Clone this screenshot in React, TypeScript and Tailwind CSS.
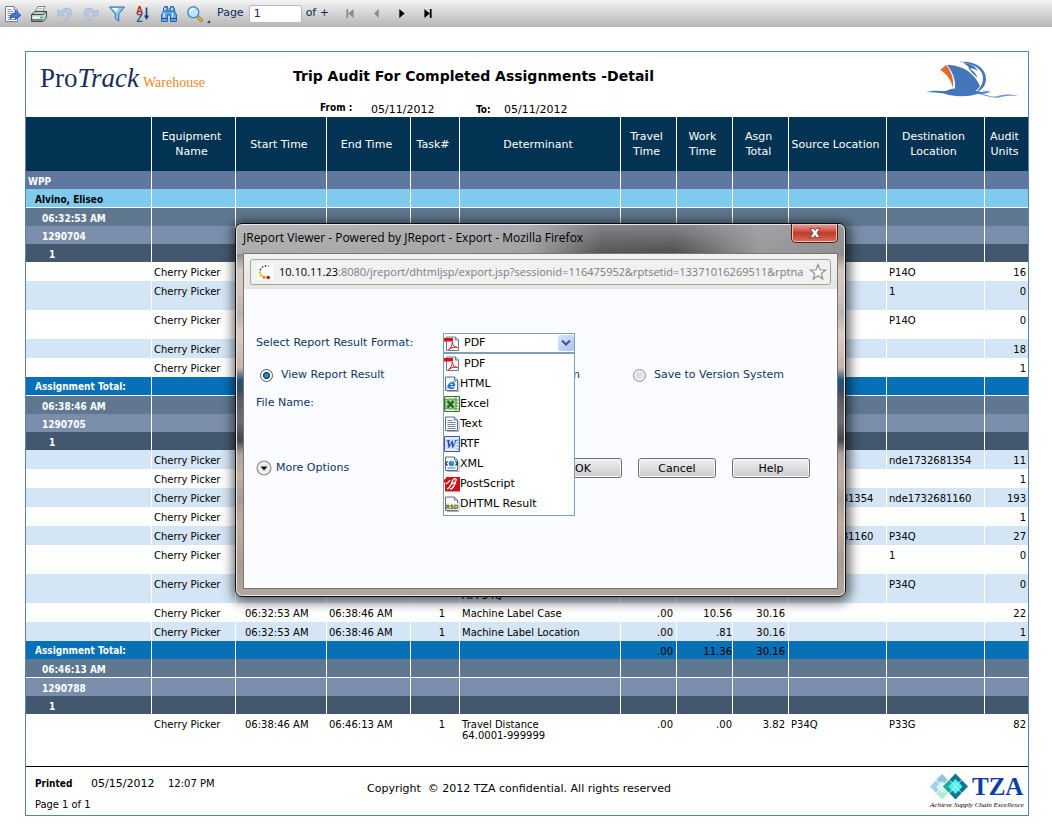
import { ReactNode, useState } from "react";

type RowKind = "site" | "person" | "time" | "assignment" | "task" | "total" | "even" | "odd";

type Row = {
  kind: RowKind;
  label?: string;
  cells?: string[];
  height?: "tall" | "last";
  line?: boolean;
};

// cells: equipment, start, end, task, determinant, travel, work, total, source, destination, units
const item = (start: string, end: string, rest: string[]) => ["Cherry Picker", start, end, start ? "1" : "", ...rest];
const A = "06:32:53 AM";
const B = "06:38:46 AM";
const C = "06:46:13 AM";

const rows: Row[] = [
  { kind: "site", label: "WPP" },
  { kind: "person", label: "Alvino, Eliseo", line: true },
  { kind: "time", label: A },
  { kind: "assignment", label: "1290704" },
  { kind: "task", label: "1" },
  { kind: "odd", cells: item("", "", ["", "", "", "", "", "P14O", "16"]) },
  { kind: "even", height: "tall", cells: item("", "", ["", "", "", "", "", "1", "0"]) },
  { kind: "odd", height: "tall", cells: item("", "", ["", "", "", "", "", "P14O", "0"]) },
  { kind: "even", cells: item("", "", ["", "", "", "", "", "", "18"]) },
  { kind: "odd", cells: item("", "", ["", "", "", "", "", "", "1"]) },
  { kind: "total", label: "Assignment Total:", line: true },
  { kind: "time", label: B },
  { kind: "assignment", label: "1290705" },
  { kind: "task", label: "1" },
  { kind: "even", cells: item("", "", ["", "", "", "", "", "nde1732681354", "11"]) },
  { kind: "odd", cells: item("", "", ["", "", "", "", "", "", "1"]) },
  { kind: "even", cells: item("", "", ["", "", "", "", "nde1732681354", "nde1732681160", "193"]) },
  { kind: "odd", cells: item("", "", ["", "", "", "", "", "", "1"]) },
  { kind: "even", cells: item("", "", ["", "", "", "", "nde1732681160", "P34Q", "27"]) },
  { kind: "odd", height: "tall", cells: item("", "", ["", "", "", "", "", "1", "0"]) },
  { kind: "even", height: "tall", cells: item("", "", ["\nAt P34Q", "", "", "", "", "P34Q", "0"]) },
  { kind: "odd", cells: item(A, B, ["Machine Label Case", ".00", "10.56", "30.16", "", "", "22"]) },
  { kind: "even", cells: item(A, B, ["Machine Label Location", ".00", ".81", "30.16", "", "", "1"]) },
  { kind: "total", label: "Assignment Total:", cells: ["", "", "", "", "", ".00", "11.36", "30.16", "", "", ""] },
  { kind: "time", label: C, line: true },
  { kind: "assignment", label: "1290788" },
  { kind: "task", label: "1" },
  { kind: "odd", height: "last", cells: item(B, C, ["Travel Distance\n64.0001-999999", ".00", ".00", "3.82", "P34Q", "P33G", "82"]) },
];

const rowStyle: Record<RowKind, string> = {
  site: "bg-[#6078a0]",
  person: "bg-[#80caee]",
  time: "bg-[#5f788f]",
  assignment: "bg-[#7a8dab]",
  task: "bg-[#43586e]",
  total: "bg-[#0870b6]",
  even: "bg-[#d4e5f5]",
  odd: "bg-white",
};

const labelStyle: Record<RowKind, string> = {
  site: "pl-0.5 pt-0.5 text-white",
  person: "pl-[9px] pt-0.5 text-black",
  time: "pl-4 pt-0.5 text-white",
  assignment: "pl-4 pt-0.5 text-white",
  task: "pl-[23px] pt-0.5 text-white",
  total: "pl-[9px] text-white",
  even: "",
  odd: "",
};

const cellStyle = [
  "pl-0.5",
  "pl-[9px]",
  "pl-0.5",
  "pr-3.5 text-right",
  "pl-0.5",
  "pr-[3px] text-right",
  "text-right",
  "pr-[3px] text-right",
  "pl-0.5",
  "pl-0.5",
  "pr-0.5 text-right",
];

const columns = [
  { width: "w-[126px]", title: "" },
  { width: "w-[84px]", title: "Equipment\nName" },
  { width: "w-[91px]", title: "Start Time" },
  { width: "w-[84px]", title: "End Time" },
  { width: "w-[49px]", title: "Task#" },
  { width: "w-[161px]", title: "Determinant" },
  { width: "w-[56px]", title: "Travel\nTime" },
  { width: "w-[56px]", title: "Work\nTime" },
  { width: "w-[56px]", title: "Asgn\nTotal" },
  { width: "w-[98px]", title: "Source Location" },
  { width: "w-[98px]", title: "Destination\nLocation" },
  { width: "w-[43px]", title: "Audit\nUnits" },
];

function rowHeight(row: Row) {
  if (row.height === "last") return "h-[52px]";
  if (row.height === "tall") return "h-[29px]";
  if (row.line || row.kind === "even" || row.kind === "odd") return "h-[19px]";
  return "h-[18px]";
}

function Icon({ children, className = "size-4" }: { children: ReactNode; className?: string }) {
  return (
    <svg viewBox="0 0 16 16" className={className + " shrink-0"} aria-hidden="true">
      {children}
    </svg>
  );
}

function ExportIcon() {
  return (
    <Icon>
      <path d="M.5 .5h8.500l3.500 3.500v11.500H.5z" fill="#fff" stroke="#6d7f9c" />
      <path d="M9 .5v3.500h3.500" fill="#dfe6f2" stroke="#6d7f9c" />
      <path d="M2.500 3.500h4M2.500 5.500h6M2.500 7.500h4M2.500 9.500h3M2.500 11.500h2M2.500 13.500h8" stroke="#7d8ba5" strokeWidth=".9" />
      <path d="M5 12.500c0-4 2-5.500 5.500-5.500V4.500l5.300 4.700-5.300 4.500v-2.500c-2 0-3.500.3-5.500 1.300z" fill="#3f77e6" stroke="#1b3fae" strokeWidth=".8" />
    </Icon>
  );
}

function PrintIcon() {
  return (
    <Icon>
      <path d="M4.500 6l2.500-5.500h7L11.500 6z" fill="#fff" stroke="#5f6b6b" strokeWidth=".8" />
      <path d="M7.500 2.500h4M6.800 4.200h4" stroke="#8fa0a0" strokeWidth=".7" />
      <path d="M.5 8.500L4 5.500h11.500v6l-3.500 4H.5z" fill="#c3cccc" stroke="#434e4e" />
      <path d="M.5 8.500h11.500l3.500-3" fill="none" stroke="#434e4e" />
      <path d="M2 11.500h8.500" stroke="#fff" strokeWidth="1.600" />
      <path d="M1 14h10.500" stroke="#5b6767" strokeWidth="1.400" />
      <path d="M9 11.500h2.500M10 13.500h2" stroke="#2fd03c" strokeWidth="1.600" />
    </Icon>
  );
}

function UndoIcon({ flip = false }: { flip?: boolean }) {
  return (
    <Icon className={flip ? "size-4 -scale-x-100" : "size-4"}>
      <path d="M1 3.500V10h6.500L5.300 7.800C7 5.300 10.800 5 10.800 8c0 2.800-1.300 4.500-3.300 7 4-1.800 7.300-4.800 7.300-8.500C14.800 1.300 8 .3 3.300 5.800z" fill="#b9c9e4" stroke="#9db1d6" strokeWidth=".7" />
    </Icon>
  );
}

function FilterIcon() {
  return (
    <Icon>
      <path d="M.6 1h14.800L9.700 8v7L6.300 12.500V8z" fill="#8fcdf3" stroke="#2468b4" />
      <path d="M2.500 2h7L7.500 6z" fill="#e9f7ff" />
    </Icon>
  );
}

function SortIcon() {
  return (
    <Icon>
      <text x="4.500" y="7.500" textAnchor="middle" fontFamily="Liberation Sans, sans-serif" fontWeight="bold" fontSize="10" fill="#b3261a">
        A
      </text>
      <text x="4.500" y="15.500" textAnchor="middle" fontFamily="Liberation Sans, sans-serif" fontWeight="bold" fontSize="10" fill="#2f5c86">
        Z
      </text>
      <path d="M11.500 1.500v10" stroke="#173c8a" strokeWidth="1.600" />
      <path d="M9 9.500h5L11.500 14z" fill="#173c8a" />
    </Icon>
  );
}

function FindIcon() {
  return (
    <Icon>
      <path d="M2.500 2h1v-1.500h3V2h.5v3h2V2h.5V.5h3V2h1v3l2 4v6.500H9.500V9h-3v6.500H.5V9l2-4z" fill="#5aa6e2" stroke="#1c5da6" strokeWidth=".9" />
      <path d="M2.500 5h4M9.500 5h4M.5 12.500h6M9.500 12.500h6" stroke="#1c4f8e" strokeWidth=".9" />
      <path d="M3 6.500v5M11.500 6.500v5M4 2v2.500M11 2v2.500" stroke="#d9f0ff" strokeWidth="1.400" />
    </Icon>
  );
}

function ZoomIcon() {
  return (
    <Icon>
      <path d="M10.500 10.500l3.800 3.800" stroke="#8f6a33" strokeWidth="3.200" strokeLinecap="round" />
      <path d="M10.500 10.500l3.800 3.800" stroke="#f0b34c" strokeWidth="1.800" strokeLinecap="round" />
      <circle cx="6.300" cy="6.300" r="5.500" fill="#bfe3fb" stroke="#3a8edb" strokeWidth="1.400" />
      <path d="M3 6c.3-2.300 2-3.300 4.300-3" fill="none" stroke="#fff" strokeWidth="1.600" />
    </Icon>
  );
}

function Sheet() {
  return (
    <>
      <path d="M3 15.500h12V5" fill="none" stroke="#a9b3c2" />
      <path d="M1.500 1h9l3 3v10.500h-12z" fill="#f6f8fb" stroke="#5c6d86" />
      <path d="M10.500 1v3h3" fill="#dce3ee" stroke="#5c6d86" />
    </>
  );
}

const formats: { name: string; icon: ReactNode }[] = [
  {
    name: "PDF",
    icon: (
      <Icon>
        <path d="M2.500 1h9l3 3v10.500h-12z" fill="#f7f7f7" stroke="#6a7a8c" />
        <path d="M11.500 1v3h3" fill="none" stroke="#6a7a8c" />
        <path d="M0 2h9v3.500H0z" fill="#d8121a" />
        <path d="M4.500 13.500c2-1 3.800-4 3.800-7.500.3 3.500 2.200 5 5.200 5.500-3-.8-6 0-9 2z" fill="none" stroke="#cf2025" />
      </Icon>
    ),
  },
  {
    name: "HTML",
    icon: (
      <Icon>
        <Sheet />
        <text x="7.200" y="13.300" textAnchor="middle" fontFamily="DejaVu Sans, sans-serif" fontWeight="bold" fontStyle="italic" fontSize="12" fill="#1668d4">
          e
        </text>
        <path d="M2.500 13c1-4.500 4.500-8 9.500-7.500" fill="none" stroke="#4ba3ef" strokeWidth=".9" />
      </Icon>
    ),
  },
  {
    name: "Excel",
    icon: (
      <Icon>
        <path d="M.5 .5h15v15H.5z" fill="#e8f3e4" stroke="#2f7a2c" />
        <path d="M12 1v14M12 4h3M12 7h3M12 10h3M12 13h3" stroke="#6aa965" />
        <path d="M1 3h11v10H1z" fill="#9fcb95" stroke="#2f7a2c" strokeWidth=".6" />
        <path d="M3.500 5l6 6.500M9.500 5l-6 6.500" stroke="#17601a" strokeWidth="2" />
      </Icon>
    ),
  },
  {
    name: "Text",
    icon: (
      <Icon>
        <Sheet />
        <path d="M3.500 4.500h5M3.500 6.500h8M3.500 8.500h8M3.500 10.500h8M3.500 12.500h8" stroke="#6d7680" strokeWidth=".9" />
      </Icon>
    ),
  },
  {
    name: "RTF",
    icon: (
      <Icon>
        <path d="M.5 .5h15v15H.5z" fill="#e3ecfb" stroke="#3559b8" />
        <path d="M12.500 4h2.500M12.500 7h2.500M12.500 10h2.500M12.500 13h2.500" stroke="#7892cf" />
        <path d="M1 3h11.500v10H1z" fill="#cddcf7" />
        <text x="7" y="12" textAnchor="middle" fontFamily="Liberation Serif, serif" fontWeight="bold" fontStyle="italic" fontSize="12" fill="#1f3fa0">
          W
        </text>
      </Icon>
    ),
  },
  {
    name: "XML",
    icon: (
      <Icon>
        <Sheet />
        <circle cx="7.500" cy="7.500" r="2.800" fill="#2a86d8" />
        <circle cx="8.300" cy="6.700" r="1" fill="#5bc26a" />
        <path d="M3.500 5.500l-2 2 2 2M11.500 5.500l2 2-2 2" fill="none" stroke="#17305e" strokeWidth="1.200" />
        <path d="M3.500 12h8" stroke="#4d78b8" />
      </Icon>
    ),
  },
  {
    name: "PostScript",
    icon: (
      <Icon>
        <path d="M2.500 1H16v14.500H1V8z" fill="#d1101b" />
        <path d="M0 7l6-6H3L0 4z" fill="#d1101b" />
        <path d="M3 13c3-1 4-4 5-7s3-4 4-3-1 4-4 5M6 13c4 0 3-4 6-6M2 8c2-1 3-2 4-4" fill="none" stroke="#fff" strokeWidth="1.300" />
      </Icon>
    ),
  },
  {
    name: "DHTML Result",
    icon: (
      <Icon>
        <Sheet />
        <path d="M2 7h12v7H2z" fill="#f3f0d8" />
        <text x="8" y="13" textAnchor="middle" fontFamily="DejaVu Sans Condensed, sans-serif" fontWeight="bold" fontSize="6" fill="#5a5410">
          RSD
        </text>
      </Icon>
    ),
  },
];

function Toolbar() {
  const tools = [
    { name: "Export", icon: <ExportIcon /> },
    { name: "Print", icon: <PrintIcon /> },
    { name: "Undo", icon: <UndoIcon /> },
    { name: "Redo", icon: <UndoIcon flip /> },
    { name: "Filter", icon: <FilterIcon /> },
    { name: "Sort", icon: <SortIcon /> },
    { name: "Search", icon: <FindIcon /> },
    { name: "Zoom", icon: <ZoomIcon /> },
  ];
  const nav = [
    { name: "First page", color: "text-[#8a8a8a]", d: "M1 0h2v10H1zM9 0v10L3 5z" },
    { name: "Previous page", color: "text-[#8a8a8a]", d: "M8 0v10L3 5z" },
    { name: "Next page", color: "text-black", d: "M2 0v10l6-5z" },
    { name: "Last page", color: "text-black", d: "M1 0v10l6-5zM7 0h2v10H7z" },
  ];
  return (
    <header className="flex h-[27px] items-center bg-linear-to-b from-[#f4f4f4] to-[#b6b6b6] pl-[5px] text-[11px] text-[#0a2a5c]">
      <div className="flex gap-2.5">
        {tools.map((t) => (
          <button key={t.name} type="button" aria-label={t.name}>
            {t.icon}
          </button>
        ))}
      </div>
      <svg viewBox="0 0 4 4" className="mb-1 ml-1 size-[3px] self-end" aria-hidden="true">
        <path d="M4 0v4H0z" fill="#12305f" />
      </svg>
      <label htmlFor="page" className="ml-[7px]">
        Page
      </label>
      <input id="page" defaultValue="1" className="ml-[5px] h-[18px] w-[53px] rounded-xs border border-[#b5b9c2] bg-white px-1" />
      <span className="ml-1">of +</span>
      <div className="ml-4 flex gap-4">
        {nav.map((n) => (
          <button key={n.name} type="button" aria-label={n.name} className={n.color}>
            <svg viewBox="0 0 10 10" className="h-[9px] w-2.5" fill="currentColor" aria-hidden="true">
              <path d={n.d} />
            </svg>
          </button>
        ))}
      </div>
    </header>
  );
}

function ShipLogo() {
  return (
    <svg viewBox="0 0 94 40" className="h-10 w-[94px]" aria-hidden="true">
      <path d="M14 10l6-5c6 7 8 15 7 23-2-8-6-14-13-18z" fill="#e2692b" />
      <path d="M21 5c12 0 26 5 33 21-3 5-8 8-14 8H28C31 24 28 13 21 5z" fill="#4376bb" />
      <path d="M33 2c14-2 27 5 27 17 0 7-5 12-11 14 5-4 8-9 8-15C57 9 47 3 33 2z" fill="#4376bb" />
      <path d="M37 3c7 0 12 3 15 8-3-2-6-3-8-2 4 2 6 5 8 9-4-3-7-6-9-9 0-3-3-4-6-6z" fill="#4376bb" />
      <path d="M37 3.500c3 2 5 4 6 7 2 3 5 6 9 8" fill="none" stroke="#fff" strokeWidth=".9" />
      <path d="M0 32c8-2 14-1 20-1 8-4 20-3 30 0 6 1 9 2 14 0-3 3-8 3-13 3-9 3-24 3-33-.5C12 32.500 6 32.500 0 32z" fill="#4376bb" />
      <path d="M52 33.500c8 0 12 4.500 20 2.500 6-2 12-2 21 0-8-.5-14-.5-20 1.500-7 1-14-2-21-4z" fill="#6f98cf" />
      <path d="M57 31l7 1" stroke="#6f98cf" />
    </svg>
  );
}

function TzaLogo() {
  return (
    <div className="w-[95px]">
      <div className="flex h-7 items-center">
        <svg viewBox="0 0 40 28" className="h-7 w-10 shrink-0" aria-hidden="true">
          <path d="M12 1l6 6-6 6-6-6z" fill="#8cc6e0" />
          <path d="M6 7.500l6 6-6 6.500-6-6.500z" fill="#a3cfe8" />
          <path d="M18 7.500l5 6-5 6.500-6-6.500z" fill="#c9f3e4" />
          <path d="M12 14.500l6 6-6 6-6-6z" fill="#b0ecd8" />
          <path d="M12 8l6 6-6 6-6-6z" fill="#d3f6ee" />
          <path d="M25.500 .5l12.500 13-12.500 13-12.500-13z" fill="#0b7890" />
          <path d="M19.500 7.500l6 6-6 6.500-6-6.500z" fill="#14b09a" />
          <path d="M25.500 6l7 7.500-7 7.500-7-7.500z" fill="#4ff0ee" />
          <path d="M19.500 7l12 13M31.500 7l-12 13M6 7l12 13M18 7L6 20" stroke="#fff" strokeWidth=".8" />
        </svg>
        <span className="ml-0.5 font-['Liberation_Serif',serif] text-[25px] leading-7 font-bold text-[#0b3fa0]">TZA</span>
      </div>
      <p className="font-['Liberation_Serif',serif] text-[7px] leading-2 whitespace-nowrap text-black italic">Achieve Supply Chain Excellence</p>
    </div>
  );
}

function Report() {
  return (
    <main className="mt-6 mr-[23px] ml-[25px] border border-[#5585ac] bg-white">
      <div className="flex h-[65px]">
        <div className="w-[267px] shrink-0 pt-2.5 pl-3.5 font-['Liberation_Serif',serif] whitespace-nowrap text-[#1b2e5a]">
          <span className="text-[27px] leading-8">
            Pro<i>Track</i>
          </span>
          <span className="ml-1 text-[14px] text-[#ee8a24]">Warehouse</span>
        </div>
        <div className="shrink-0">
          <h1 className="pt-3.5 text-[14px] leading-5 font-bold whitespace-nowrap">Trip Audit For Completed Assignments -Detail</h1>
          <dl className="mt-3 flex pl-[27px] text-[11px] leading-6">
            <dt className="w-[51px] font-['DejaVu_Sans_Condensed','DejaVu_Sans',sans-serif] text-[10px] leading-5 font-bold">From :</dt>
            <dd className="w-[105px]">05/11/2012</dd>
            <dt className="w-7 font-['DejaVu_Sans_Condensed','DejaVu_Sans',sans-serif] text-[10px] leading-6 font-bold">To:</dt>
            <dd>05/11/2012</dd>
          </dl>
        </div>
        <div className="mr-2 ml-auto pt-2">
          <ShipLogo />
        </div>
      </div>

      <table className="w-full table-fixed border-separate border-spacing-0 text-[10px] leading-[11px]">
        <colgroup>
          {columns.map((c, i) => (
            <col key={i} className={c.width} />
          ))}
        </colgroup>
        <thead>
          <tr className="h-[54px] bg-[#033353] text-white">
            {columns.map((c, i) => (
              <th
                key={i}
                scope="col"
                className="border-r border-white py-0 pr-1 pl-0 text-center text-[11px] leading-[15px] font-normal whitespace-pre last:border-r-0"
              >
                {c.title}
              </th>
            ))}
          </tr>
        </thead>
        <tbody>
          {rows.map((row, i) => {
            const edge = row.line ? " border-b border-b-white" : "";
            const top = row.kind === "even" || row.kind === "odd" || row.kind === "total" ? " pt-[5px]" : " pt-1";
            return (
              <tr key={i} className={rowStyle[row.kind] + " " + rowHeight(row)}>
                <th
                  scope="row"
                  className={
                    "border-r border-r-white pr-0 text-left align-middle font-['DejaVu_Sans_Condensed','DejaVu_Sans',sans-serif] font-bold " +
                    labelStyle[row.kind] +
                    edge
                  }
                >
                  {row.label}
                </th>
                {cellStyle.map((style, j) => (
                  <td key={j} className={"border-r border-r-white align-top whitespace-pre last:border-r-0 " + style + edge + (row.cells?.[j] ? top : "")}>
                    {row.cells?.[j]}
                  </td>
                ))}
              </tr>
            );
          })}
        </tbody>
      </table>

      <footer className="flex h-[49px] border-t border-black">
        <div className="w-[341px] shrink-0 pt-1.5 pl-[9px] text-[10px] leading-[21px]">
          <p className="flex">
            <b className="w-14 font-['DejaVu_Sans_Condensed','DejaVu_Sans',sans-serif]">Printed</b>
            <span className="w-[77px] text-[11px]">05/15/2012</span>
            <span>12:07 PM</span>
          </p>
          <p className="font-['DejaVu_Sans_Condensed','DejaVu_Sans',sans-serif] text-[11px]">Page 1 of 1</p>
        </div>
        <p className="pt-3.5 text-[11px] leading-4 whitespace-pre">Copyright  © 2012 TZA confidential. All rights reserved</p>
        <div className="mr-[3px] ml-auto pt-1.5">
          <TzaLogo />
        </div>
      </footer>
    </main>
  );
}

function Choice({ label, checked, onChange }: { label: string; checked: boolean; onChange: () => void }) {
  return (
    <label className="flex items-center gap-2">
      <input
        type="radio"
        name="target"
        checked={checked}
        onChange={onChange}
        className="size-[13px] appearance-none rounded-full border border-[#8a8f96] bg-radial from-[#d4d4d4] to-white checked:border-[#4c5866] checked:bg-radial checked:from-[#2d8fc4] checked:from-20% checked:via-[#123a5e] checked:via-40% checked:to-white checked:to-50%"
      />
      {label}
    </label>
  );
}

function PushButton({ children }: { children: ReactNode }) {
  return (
    <button
      type="button"
      className="h-5 w-[78px] rounded-[3px] border border-[#707070] bg-linear-to-b from-[#f3f3f3] from-0% via-[#dcdcdc] via-50% to-[#cdcdcd] text-black inset-shadow-[0_0_0_1px_#f6f6f6]"
    >
      {children}
    </button>
  );
}

function ExportDialog() {
  const [format, setFormat] = useState("PDF");
  const [target, setTarget] = useState("view");
  const current = formats.find((f) => f.name === format);

  return (
    <section
      role="dialog"
      aria-label="Export"
      className="absolute top-[223px] left-[235px] w-[611px] rounded-[7px] border border-[#0c0c0c] [background:linear-gradient(90deg,rgba(190,190,190,.85)_0%,rgba(178,178,180,.85)_48%,rgba(120,118,120,.3)_60%,rgba(110,110,112,.2)_72%,rgba(168,167,170,.85)_86%,rgba(155,155,158,.85)_100%)_0_0/100%_30px_no-repeat,linear-gradient(#8d8b8c_0px,#6b696b_14px,#48484b_29px,#8d8b8c_30px,#d6c8be_46px,#cfc4bc_70px,#b9b4b1_90px,#dccdc2_110px,#c6b4a6_144px,#245373_156px,#2b4d66_164px,#5c5c5f_176px,#6f6d72_196px,#454548_216px,#aca49f_230px,#c4b1a1_250px,#a79d95_275px,#c3ae9e_300px,#a99c93_340px,#b2a69d_372px)] px-[7px] pb-[7px] shadow-[1px_2px_12px_3px_rgba(0,0,0,0.6)] inset-shadow-[0_0_0_1px_#e9e7e5]"
    >
      <div className="flex h-[29px] justify-between">
        <h2 className="pt-[5px] font-['Open_Sans','Noto_Sans',sans-serif] text-[12px] leading-[18px] whitespace-nowrap text-black">
          JReport Viewer - Powered by JReport - Export - Mozilla Firefox
        </h2>
        <button
          type="button"
          aria-label="Close"
          className="flex h-[19px] w-[47px] justify-center rounded-b-[5px] border border-t-0 border-[#4b1b17] bg-linear-to-b from-[#e6a196] from-0% via-[#c0392a] via-50% to-[#d8705a] inset-shadow-[0_0_0_1px_#f0c4bb]"
        >
          <svg viewBox="0 0 12 10" className="mt-1 h-2.5 w-3" aria-hidden="true">
            <path d="M1 .5h3.500L6 2.500 7.500.5H11L8 5l3 4.500H7.500L6 7.500 4.500 9.500H1L4 5z" fill="#fff" stroke="#5a4a52" strokeWidth=".9" />
          </svg>
        </button>
      </div>

      <div className="border border-[#77757a] bg-[#fbfcff]">
        <div className="bg-linear-to-b from-[#f2f2ef] to-[#e4e5de] px-1.5 pt-[5px] pb-1">
          <div className="flex h-[26px] items-center rounded-[3px] border border-[#a3a39f] bg-[#f1f1f1] pr-[3px] pl-1.5">
            <svg viewBox="0 0 16 16" className="size-4 shrink-0 bg-white" aria-hidden="true">
              <circle cx="11.500" cy="2" r=".8" fill="#6b5a9b" />
              <circle cx="8.500" cy="2" r=".9" fill="#33407c" />
              <circle cx="5.500" cy="3" r="1" fill="#2f5e94" />
              <circle cx="3.500" cy="5.500" r="1.100" fill="#1d6b45" />
              <circle cx="2.800" cy="8.500" r="1.200" fill="#d6c020" />
              <circle cx="4.200" cy="11.300" r="1.400" fill="#f0c400" />
              <circle cx="7" cy="13.200" r="1.500" fill="#e8751a" />
              <circle cx="11.200" cy="13.500" r="1.800" fill="#cc1414" />
            </svg>
            <p className="ml-1.5 flex-1 overflow-hidden font-['Open_Sans','Noto_Sans',sans-serif] text-[11px] whitespace-nowrap text-[#7c7c7c]">
              <span className="text-black">10.10.11.23</span>:8080/jreport/dhtmljsp/export.jsp?sessionid=116475952&amp;rptsetid=13371016269511&amp;rptna
            </p>
            <svg viewBox="0 0 18 18" className="size-[18px] shrink-0" aria-hidden="true">
              <path d="M9 1.500l2 5.300 5.700.2-4.500 3.500 1.600 5.500L9 12.800 4.200 16l1.600-5.500L1.300 7l5.700-.2z" fill="#fcfcfc" stroke="#949494" strokeWidth="1.200" />
            </svg>
          </div>
        </div>

        <form className="h-[299px] pt-11 pl-3 text-[11px] leading-5 text-[#0e3566]" onSubmit={(e) => e.preventDefault()}>
          <div className="flex">
            <label htmlFor="format" className="w-[187px]">
              Select Report Result Format:
            </label>
            <div className="relative h-5 w-[132px]">
              <select
                id="format"
                value={format}
                onChange={(e) => setFormat(e.target.value)}
                className="block h-5 w-full appearance-none border border-[#7f9db9] bg-white pl-5 leading-[18px] text-black"
              >
                {formats.map((f) => (
                  <option key={f.name}>{f.name}</option>
                ))}
              </select>
              <span className="pointer-events-none absolute top-[3px] left-px">{current?.icon}</span>
              <span className="pointer-events-none absolute top-0.5 right-px flex h-4 w-4 items-center justify-center rounded-xs bg-linear-to-br from-[#dbe5ff] to-[#a9c2f5]">
                <svg viewBox="0 0 10 8" className="h-2 w-2.5" aria-hidden="true">
                  <path d="M1 1.500l4 4 4-4" fill="none" stroke="#435a80" strokeWidth="2.200" />
                </svg>
              </span>
              <ul role="listbox" aria-label="Formats" className="absolute top-5 left-0 z-10 w-full border border-[#7f9db9] bg-white pb-px text-black">
                {formats.map((f) => (
                  <li
                    key={f.name}
                    role="option"
                    aria-selected={f.name === format}
                    onClick={() => setFormat(f.name)}
                    className={f.name === "PDF" ? "flex h-5 items-center gap-1" : "flex h-5 items-center"}
                  >
                    {f.icon}
                    {f.name}
                  </li>
                ))}
              </ul>
            </div>
          </div>

          <div className="mt-3 grid grid-cols-[191px_182px_1fr] pl-1">
            <Choice label="View Report Result" checked={target === "view"} onChange={() => setTarget("view")} />
            <Choice label="Save to File System" checked={target === "file"} onChange={() => setTarget("file")} />
            <Choice label="Save to Version System" checked={target === "version"} onChange={() => setTarget("version")} />
          </div>
          <p className="mt-2">File Name:</p>

          <div className="mt-[45px] flex items-center">
            <button type="button" className="flex items-center gap-1">
              <svg viewBox="0 0 16 16" className="size-4" aria-hidden="true">
                <circle cx="8" cy="8" r="7" fill="#ececec" stroke="#8c8c8c" strokeWidth="1.200" />
                <path d="M4.500 6.500h7L8 10.500z" fill="#111" />
              </svg>
              More Options
            </button>
            <div className="mr-[27px] ml-auto flex gap-4">
              <PushButton>OK</PushButton>
              <PushButton>Cancel</PushButton>
              <PushButton>Help</PushButton>
            </div>
          </div>
        </form>
      </div>
    </section>
  );
}

export default function App() {
  return (
    <div className="relative min-h-screen bg-white font-['DejaVu_Sans','Liberation_Sans',sans-serif] text-black">
      <Toolbar />
      <Report />
      <ExportDialog />
    </div>
  );
}
